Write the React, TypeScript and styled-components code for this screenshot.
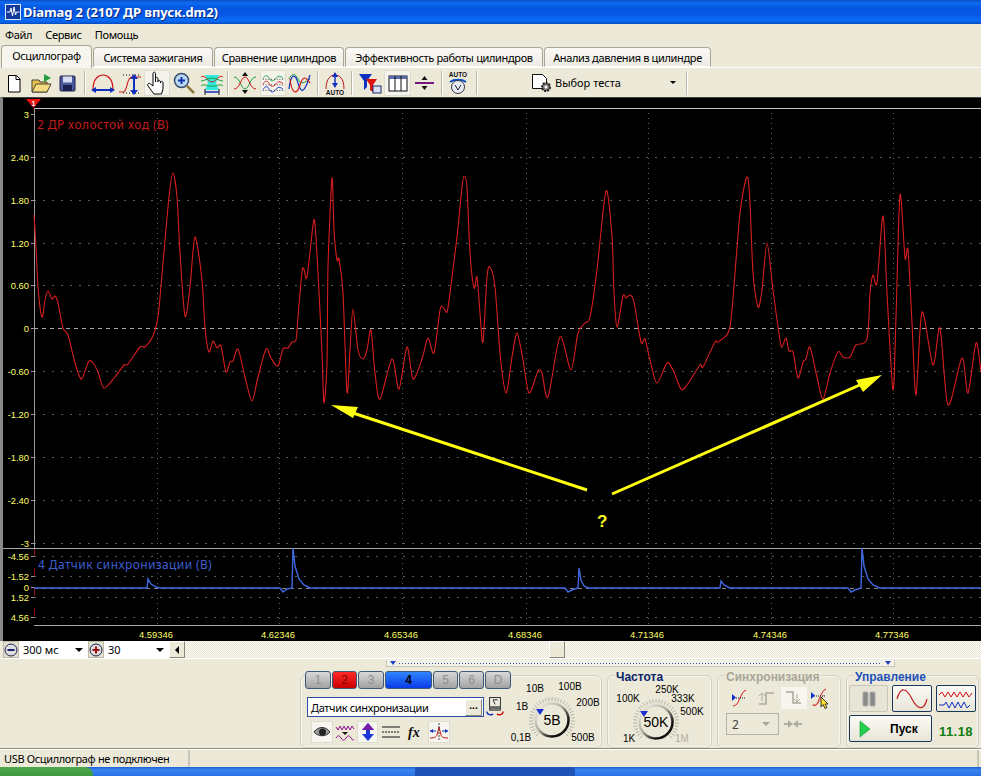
import React from 'react';
import styled, { createGlobalStyle } from 'styled-components';

const Global = createGlobalStyle`
  html, body { margin: 0; padding: 0; background: #ece9d8; }
  body { font-family: "Noto Sans", "Liberation Sans", sans-serif; font-size: 11px; color: #000; }
  * { box-sizing: border-box; }
`;

const Win = styled.div`
  width: 981px; height: 776px; overflow: hidden; display: flex; flex-direction: column; background: #ece9d8;
`;
const TitleBar = styled.div`
  height: 24px; flex: none; display: flex; align-items: center; gap: 2px; padding-left: 5px;
  background: linear-gradient(180deg,#0a4fc4 0,#0f6cf2 3px,#0558e2 7px,#0556e4 14px,#0a6cf6 20px,#0a62e8 22px,#0448b8 24px);
`;
const TitleText = styled.span`
  color: #fff; font: bold 13px "Noto Sans", sans-serif; letter-spacing: -0.1px; text-shadow: 1px 1px 0 #0a2a80; white-space: nowrap;
`;
const MenuBar = styled.div`
  height: 20px; flex: none; display: flex; align-items: center; padding-left: 5px; gap: 13px; font-size: 11px; letter-spacing: -0.3px;
`;
const TabStrip = styled.div`
  height: 24px; flex: none; display: flex; align-items: flex-end; padding-left: 1px; gap: 1px;
  border-bottom: 1px solid #fff;
`;
const Tab = styled.div<{ $active?: boolean; $w: number }>`
  width: ${p => p.$w}px; height: ${p => (p.$active ? 23 : 20)}px; display: flex; align-items: center; justify-content: center;
  border: 1px solid #a8a698; border-bottom: ${p => (p.$active ? 'none' : '1px solid #fff')};
  border-radius: 4px 4px 0 0;
  background: ${p => (p.$active ? '#f6f5ee' : 'linear-gradient(180deg,#fbfaf6,#ecebe2)')};
  ${p => (p.$active ? 'margin-bottom:-1px;padding-bottom:3px;' : '')}
  white-space: nowrap; font-size: 11px; letter-spacing: -0.35px;
`;
const Toolbar = styled.div`
  height: 29px; flex: none; display: flex; align-items: center; background: #ece9d8;
`;
const ToolBtn = styled.div<{ $w: number; $on?: boolean }>`
  width: ${p => p.$w}px; height: 26px; flex: none; display: flex; align-items: center; justify-content: center;
  ${p => (p.$on ? 'background:#f4f3ec;border:1px solid #dedcce;' : '')}
`;
const Sep = styled.div<{ $w: number }>`
  width: ${p => p.$w}px; height: 24px; flex: none; display: flex; justify-content: center;
  &::before { content: ''; width: 2px; height: 100%; background: linear-gradient(90deg,#b8b6a6 50%,#fff 50%); }
`;
const TestSelect = styled.div`
  width: 197px; flex: none; display: flex; align-items: center; padding: 0 7px 0 45px; gap: 2px; font-size: 11px;
`;
const TestLabel = styled.span` flex: 1; `;
const DownArrow = styled.span<{ $s?: number }>`
  width: 0; height: 0; border: ${p => p.$s ?? 4}px solid transparent; border-top: ${p => p.$s ?? 4}px solid #000; border-bottom: 0; flex: none;
`;
const ChartFrame = styled.div`
  height: 544px; flex: none; border-left: 3px solid #8a8a8a; background: #000; border-top: 1px solid #444;
  svg { display: block; }
`;
const ChartText = styled.text`
  font-family: "Liberation Sans", sans-serif; font-size: 9.4px; fill: #ffff66;
`;
const ChannelName = styled.text<{ $c: string }>`
  font-family: "Noto Sans", sans-serif; font-size: 12px; fill: ${p => p.$c}; letter-spacing: 0.4px;
`;
const Quest = styled.text`
  font-family: "Liberation Sans", sans-serif; font-size: 17px; font-weight: bold; fill: #ffff20;
`;
const RangeRow = styled.div`
  height: 18px; flex: none; display: flex; padding-left: 3px; border-bottom: 1px solid #fff;
`;
const RoundBtn = styled.div`
  width: 16px; height: 17px; flex: none; display: flex; align-items: center; justify-content: center;
  background: #e4e1d2; border: 1px solid #bdbaa8;
`;
const RangeCombo = styled.div<{ $w: number }>`
  width: ${p => p.$w}px; height: 17px; flex: none; background: #fff; display: flex; align-items: center;
  justify-content: space-between; padding: 0 5px 0 4px; font-size: 11px;
`;
const ScrollTrack = styled.div`
  flex: 1; height: 17px; display: flex; align-items: stretch;
  background: repeating-conic-gradient(#fbfaf5 0 25%, #e9e6d6 0 50%) 0 0 / 2px 2px;
`;
const ScrollBtn = styled.div<{ $ml?: number }>`
  width: 16px; flex: none; margin-left: ${p => p.$ml ?? 0}px; display: flex; align-items: center; justify-content: center;
  background: #ece9d8; border: 1px solid; border-color: #fff #8a8878 #8a8878 #fff;
`;
const LeftArrow = styled.span`
  width: 0; height: 0; border: 4px solid transparent; border-right: 4px solid #000; border-left: 0;
`;
const Lower = styled.div`
  height: 90px; flex: none; padding-left: 300px; display: flex; flex-direction: column; border-bottom: 1px solid #8f8d7e;
`;
const PosSlider = styled.div`
  width: 509px; height: 7px; margin: 1px 0 0 86px; flex: none; display: flex; align-items: center; justify-content: space-between;
  padding: 0 3px; gap: 3px; border: 1px solid #c8c6b6; border-top: 0;
  background: #f3f2ea;
`;
const Dots = styled.span`
  flex: 1; height: 1px; background: repeating-linear-gradient(90deg,#3a52a8 0 1px,transparent 1px 3px);
`;
const MiniTri = styled.span`
  width: 0; height: 0; border: 3px solid transparent; border-top: 4px solid #2040c0; border-bottom: 0;
`;
const Groups = styled.div`
  display: flex; gap: 5px; margin-top: 5px; height: 76px; align-items: stretch;
`;
const Group = styled.div<{ $w: number }>`
  width: ${p => p.$w}px; flex: none; border: 1px solid #d2d0c0; border-radius: 6px; height: 73px; margin-top: 3px;
  display: flex; flex-direction: column; box-shadow: inset 0 0 0 1px #f6f5ee;
`;
const GroupTitle = styled.div<{ $c: string }>`
  font: bold 12px "Liberation Sans", sans-serif; color: ${p => p.$c}; height: 15px; line-height: 15px;
  margin: -6px 0 0 7px; padding: 0 1px; align-self: flex-start; background: #ece9d8; white-space: nowrap;
  position: relative; z-index: 1;
`;
const ChannelBody = styled.div` display: flex; height: 100%; `;
const ChannelLeft = styled.div`
  width: 203px; flex: none; display: flex; flex-direction: column; margin-top: -5px; padding-left: 4px;
`;
const ChannelRow = styled.div` display: flex; gap: 1px; width: 212px; `;
const ChBtn = styled.div<{ $kind: 'off' | 'red' | 'blue'; $w: number }>`
  width: ${p => p.$w}px; height: 18px; flex: none; display: flex; align-items: center; justify-content: center;
  font: ${p => (p.$kind === 'blue' ? 'bold 12px' : '12px')} "Liberation Sans", sans-serif;
  border: 1px solid #3d5a78; border-radius: 3px;
  color: ${p => (p.$kind === 'off' ? '#8f8f8f' : p.$kind === 'red' ? '#8a0000' : '#000')};
  background: ${p => p.$kind === 'off' ? 'linear-gradient(180deg,#d8d8d8,#a2a2a2)' : p.$kind === 'red' ? 'linear-gradient(180deg,#ff2a2a,#c80000)' : 'linear-gradient(180deg,#2f86ff,#0a3ce8)'};
`;
const SensorRow = styled.div` display: flex; align-items: center; margin: 6px 0 0 2px; gap: 2px; `;
const SensorCombo = styled.div`
  width: 177px; height: 20px; flex: none; background: #fff; border: 1px solid #2a50a8; display: flex; align-items: center;
  justify-content: space-between; padding-left: 3px; font-size: 11px; letter-spacing: -0.35px;
`;
const MoreBtn = styled.div`
  width: 17px; height: 17px; margin-right: 1px; background: #ece9d8; border: 1px solid; border-color: #fff #8a8878 #8a8878 #fff;
  font: bold 10px/11px "Liberation Sans", sans-serif; text-align: center; letter-spacing: 0;
`;
const IconRow = styled.div` display: flex; gap: 2px; margin: 2px 0 0 6px; `;
const SmallBtn = styled.div<{ $w: number; $on?: boolean }>`
  width: ${p => p.$w}px; height: 22px; flex: none; display: flex; align-items: center; justify-content: center;
  ${p => (p.$on ? 'background:#f6f5ef;border:1px solid #dedccf;' : '')}
`;
const SyncIcons = styled.div` display: flex; margin: 2px 0 0 9px; gap: 1px; `;
const SyncBtn = styled.div<{ $on?: boolean }>`
  width: 26px; height: 22px; display: flex; align-items: center; justify-content: center; flex: none;
  ${p => (p.$on ? 'background:#f6f5ef;' : '')}
`;
const SyncRow = styled.div` display: flex; align-items: center; gap: 4px; margin: 4px 0 0 8px; `;
const SyncCombo = styled.div`
  width: 53px; height: 22px; border: 1px solid #b4b2a2; display: flex; align-items: center; justify-content: space-between;
  padding: 0 8px 0 5px; font-size: 12px; color: #444;
  span:last-child { border-top-color: #a8a698; }
`;
const CtrlGrid = styled.div`
  display: grid; grid-template-columns: 39px 40px 40px; grid-template-rows: 27px 27px; row-gap: 3px; column-gap: 4px;
  margin: 0 0 0 2px;
`;
const CtrlBtn = styled.div<{ $off?: boolean }>`
  display: flex; align-items: center; justify-content: center; border-radius: 2px;
  border: 1px solid ${p => (p.$off ? '#c8c6b6' : '#17385a')};
  background: ${p => (p.$off ? '#e8e5d6' : 'linear-gradient(180deg,#fbfaf5,#e8e5d8)')};
`;
const StartBtn = styled(CtrlBtn)`
  grid-column: 1 / span 2; justify-content: flex-start; padding-left: 9px; gap: 19px;
  font: bold 12px "Liberation Sans", sans-serif;
`;
const Counter = styled.div`
  color: #0f7a0f; font: bold 13px "Liberation Sans", sans-serif; display: flex; align-items: flex-end; justify-content: center; padding-bottom: 3px; letter-spacing: 0.4px;
`;
const KnobWrap = styled.div<{ $top: number }>`
  margin-top: ${p => p.$top}px; height: 72px; flex: none; svg { display: block; }
`;
const KnobText = styled.text<{ $muted?: boolean }>`
  font-family: "Liberation Sans", sans-serif; font-size: 10px; fill: ${p => (p.$muted ? '#b0aea0' : '#000')}; text-anchor: middle;
`;
const KnobValue = styled.text`
  font-family: "Liberation Sans", sans-serif; font-size: 14px; fill: #000; text-anchor: middle;
`;
const StatusBar = styled.div`
  height: 18px; flex: none; display: flex; border-top: 1px solid #fff;
`;
const StatusCell = styled.div<{ $w?: number }>`
  ${p => (p.$w ? `width:${p.$w}px;flex:none;` : 'flex:1;')} padding-left: 4px; display: flex; align-items: center;
  border-right: 2px solid #c8c6b6; margin-right: 2px; font-size: 11px; letter-spacing: -0.35px; white-space: nowrap;
`;
const Taskbar = styled.div`
  flex: 1; display: flex; background: linear-gradient(180deg,#1f5fd8 0,#3a86ee 3px,#2a6ee4 9px);
`;
const StartPart = styled.div`
  width: 93px; flex: none; border-radius: 0 8px 0 0; background: linear-gradient(180deg,#4fa84f,#3f9a3f);
`;
const TaskItem = styled.div<{ $w: number; $ml: number; $c: string }>`
  width: ${p => p.$w}px; margin-left: ${p => p.$ml}px; flex: none; background: ${p => p.$c}; border-radius: 3px 3px 0 0;
`;

const red = '34,215 36,247 38,287 42,317 45,300 48,291 52,299 55,296 58,303 63,328 68,335 75,363 81,379 85,371 89,361 93,363 98,372 104,388 115,377 124,365 128,364 140,347 145,347 153,336 158,317 163,263 169,197 173,173 177,197 180,253 185,316 190,287 195,237 202,280 205,328 209,352 213,341 217,348 221,346 226,372 230,362 233,361 238,349 245,377 252,401 258,377 266,349 271,358 278,366 283,349 288,348 292,342 296,340 298,317 302,272 304,269 307,277 313,225 315,224 318,273 322,353 324,403 327,363 328,267 332,178 334,230 337,260 339,259 343,293 347,392 350,350 353,309 358,350 363,359 367,350 371,330 375,373 380,399 392,359 399,389 407,347 413,379 422,359 428,338 434,353 440,310 443,307 447,312 450,293 457,237 462,187 464,176 467,187 470,253 474,288 477,277 480,313 483,342 487,277 490,267 495,287 500,353 506,393 512,357 517,333 523,360 529,393 538,371 542,373 548,397 560,337 571,370 578,333 585,323 590,317 597,270 606,191 612,237 614,293 617,327 623,296 626,298 630,295 634,302 641,342 645,339 650,360 657,383 667,363 673,370 681,389 687,385 700,365 703,367 715,342 718,342 728,333 732,310 740,213 747,177 750,203 753,273 758,307 762,290 767,243 773,290 780,340 782,347 786,338 789,351 793,352 798,378 803,362 806,359 810,347 817,377 823,399 830,373 838,352 843,357 850,357 856,345 867,339 870,293 873,275 877,283 883,216 887,293 893,390 896,317 900,195 905,258 908,250 912,323 916,395 922,312 933,365 940,328 948,405 962,358 968,393 976,343 981,372';
const blue = '34,588 147,588 148,579 151,584 156,587 160,588 280,588 283,592 287,589 292,588 293,548 295,566 299,579 304,585 310,588 565,588 568,592 572,590 578,588 579,568 581,580 584,586 588,588 720,588 721,581 724,585 730,588 848,588 851,592 855,590 861,588 862,548 864,566 868,579 873,585 880,588 981,588';

// Catmull-Rom through the sampled points, so the trace has the oscilloscope's rounded shape.
const smooth = (src: string) => {
  const p = src.split(' ').map(s => s.split(',').map(Number));
  let d = `M${p[0][0]} ${p[0][1]}`;
  for (let i = 0; i < p.length - 1; i++) {
    const a = p[Math.max(i - 1, 0)], b = p[i], c = p[i + 1], e = p[Math.min(i + 2, p.length - 1)];
    const t = 0.14;
    d += `C${(b[0] + (c[0] - a[0]) * t).toFixed(1)} ${(b[1] + (c[1] - a[1]) * t).toFixed(1)} ${(c[0] - (e[0] - b[0]) * t).toFixed(1)} ${(c[1] - (e[1] - b[1]) * t).toFixed(1)} ${c[0]} ${c[1]}`;
  }
  return d;
};

const hLines = [157, 200, 243, 285, 371, 414, 457, 500, 543, 556, 576, 597, 617];
const vLines = [157, 279, 402, 526, 648, 771, 893];
const yLabels: [string, number][] = [['3', 114], ['2.40', 157], ['1.80', 200], ['1.20', 243], ['0.60', 285], ['0', 328], ['-0.60', 371], ['-1.20', 414], ['-1.80', 457], ['-2.40', 500], ['-3', 543], ['-4.56', 556], ['-1.52', 576], ['0', 587], ['1.52', 597], ['4.56', 617]];
const xLabels = ['4.59346', '4.62346', '4.65346', '4.68346', '4.71346', '4.74346', '4.77346'];

const Chart = () => (
  <svg width={978} height={543} viewBox="3 98 978 543">
    {hLines.map(y => <line key={y} x1={34} x2={981} y1={y + .5} y2={y + .5} stroke="#5e5e5e" strokeDasharray="2 7" />)}
    {vLines.map(x => <line key={x} x1={x + .5} x2={x + .5} y1={108} y2={625} stroke="#5e5e5e" strokeDasharray="1 4" />)}
    <line x1={34} x2={981} y1={328.5} y2={328.5} stroke="#a8a8a8" strokeDasharray="4 4" />
    <line x1={34} x2={981} y1={588.5} y2={588.5} stroke="#888" strokeDasharray="4 4" />
    <line x1={34} x2={981} y1={108.5} y2={108.5} stroke="#c4c4c4" />
    <line x1={34.5} x2={34.5} y1={108} y2={548} stroke="#9a9a9a" />
    <line x1={34.5} x2={34.5} y1={548} y2={625} stroke="#8a1010" strokeDasharray="8 12" />
    <line x1={3} x2={981} y1={548.5} y2={548.5} stroke="#a8a8a8" />
    <line x1={34} x2={981} y1={625.5} y2={625.5} stroke="#a8a8a8" />
    {yLabels.map(([t, y], i) => (
      <g key={i}>
        <line x1={31} x2={34} y1={y + .5} y2={y + .5} stroke="#999" />
        <ChartText x={29} y={y + 4} textAnchor="end">{t}</ChartText>
      </g>
    ))}
    {xLabels.map((t, i) => <ChartText key={t} x={vLines[i] - 1} y={638} textAnchor="middle">{t}</ChartText>)}
    <polygon points="26,99 41,99 33.5,108" fill="#f01010" />
    <text x={33.5} y={106} textAnchor="middle" fontFamily="Liberation Sans" fontWeight="bold" fontSize={7} fill="#fff">1</text>
    <ChannelName $c="#c41c1c" x={37} y={129}>2 ДР холостой ход (В)</ChannelName>
    <ChannelName $c="#3f5ed0" x={38} y={569}>4 Датчик синхронизации (В)</ChannelName>
    <path d={smooth(red)} fill="none" stroke="#d81e1e" strokeWidth={1.1} />
    <polyline points={blue} fill="none" stroke="#3f68e0" strokeWidth={1.4} />
    <line x1={587} y1={490} x2={350} y2={412} stroke="#ffff10" strokeWidth={3} />
    <polygon points="331,405 358,407 353,418" fill="#ffff10" />
    <line x1={612} y1={494} x2={862} y2={384} stroke="#ffff10" strokeWidth={3} />
    <polygon points="882,375 856,380 863,392" fill="#ffff10" />
    <Quest x={597} y={527}>?</Quest>
  </svg>
);

const S: React.FC<{ w?: number; h?: number; children: React.ReactNode }> = ({ w = 24, h = 24, children }) => (
  <svg width={w} height={h} viewBox={`0 0 ${w} ${h}`} fill="none">{children}</svg>
);
const AppLogo = () => (
  <S w={16} h={16}>
    <rect x=".5" y=".5" width="15" height="15" fill="#123a9a" stroke="#dfe8ff" />
    <path d="M2 8h3l1-4 1.500 8 1.500-9 1.500 8 1-3h3" stroke="#fff" />
  </S>
);
const NewIco = () => <S><path d="M6.500 4.500h8l3.500 3.500v13h-11.500z" fill="#fff" stroke="#000" /><path d="M14 4.500v4h4" stroke="#000" /></S>;
const OpenIco = () => <S><path d="M3 21V9h7l1 2h7v10z" fill="#e8c050" stroke="#443" /><path d="M3 21l4-8h15l-4 8z" fill="#f6dc80" stroke="#443" /><path d="M15 9V3l7 4-7 4z" fill="#22a040" /></S>;
const SaveIco = () => <S><rect x="4" y="5" width="15" height="15" rx="1" fill="#4a5a9a" stroke="#1a2050" /><rect x="7" y="5.500" width="9" height="6" fill="#d8dcf0" /><rect x="7" y="14" width="9" height="6" fill="#1a2050" /></S>;
const Ico1 = () => <S w={26}><path d="M3 19C3 7 9 4 13 4s10 3 10 15" stroke="#d01818" strokeWidth="1.200" /><path d="M3 19h20" stroke="#1030c0" strokeWidth="2" /><path d="M1 19l5-3v6zM25 19l-5-3v6z" fill="#1030c0" /></S>;
const Ico2 = () => <S w={26}><path d="M1 21h4c5 0 3-15 9-15h9" stroke="#d01818" strokeWidth="1.100" /><path d="M5 4h18M5 22h18" stroke="#111" strokeDasharray="1 2" /><path d="M16 7v13" stroke="#1030c0" strokeWidth="2" /><path d="M16 3l-4 5h8zM16 24l-4-5h8z" fill="#1030c0" /></S>;
const HandIco = () => <S w={24} h={26}><path d="M9 24l-6-8c-1-2 1-3.500 2.500-2L8 16V4c0-2.500 2.500-2.500 2.500 0v8l0-3c0-2 2.500-2 2.500 0v3c0-2 2.500-2 2.500 0v1c0-2 2.500-2 2.500 0v6l-1.500 5z" fill="#fff" stroke="#000" /></S>;
const ZoomIco = () => <S><circle cx="9.500" cy="9.500" r="7" fill="#b8d8f4" stroke="#3a4a6a" strokeWidth="1.500" /><path d="M6 9.500h7M9.500 6v7" stroke="#1030b0" strokeWidth="2" /><path d="M15 15l7 7" stroke="#8a7a40" strokeWidth="2.500" /></S>;
const CyanIco = () => <S w={26}><path d="M6 4h14l-3 8 3 7H6l3-7z" fill="#30e8dc" /><path d="M2 6c4-3 7 5 11 5s7-8 11-5" stroke="#d01818" /><path d="M2 10c4 0 6-3 11-3M2 15c4-3 7 1 11 0" stroke="#16a040" /><path d="M24 10c-4 0-6-3-11-3M24 15c-4-3-7 1-11 0" stroke="#16a040" /><path d="M6 21h14" stroke="#1030c0" strokeWidth="1.500" /><path d="M6 18v6M20 18v6" stroke="#111" /></S>;
const Ico3 = () => <S w={26}><path d="M2 6c6 0 7 12 11 12s5-12 11-12" stroke="#18a040" /><path d="M2 18c6 0 7-12 11-12s5 12 11 12" stroke="#d01818" /><path d="M13 1l-3 4h6zM13 23l-3-4h6z" fill="#111" /></S>;
const Ico4 = () => <S w={26}>{[5, 11, 17].map((y, i) => <g key={y}><path d={`M2 ${y + 2}c3-4 5-4 7 0s5 3 7 0 5-3 8 0`} stroke={['#18a040', '#d01818', '#1030c0'][i]} /><path d={`M2 ${y + 3}h22`} stroke="#222" strokeDasharray="1 2" /></g>)}</S>;
const Ico5 = () => <S w={26}><path d="M2 8c3-6 6-6 9 0s6 4 12 0" stroke="#18a040" /><path d="M2 18C4 2 8 2 11 12s6 12 12-8" stroke="#1030c0" strokeWidth="1.200" /><path d="M3 8c2 16 7 16 10 6s6-8 10-2" stroke="#d01818" strokeWidth="1.200" /></S>;
const Ico6 = () => <S w={22}><path d="M2 18C2 7 7 4 11 4s9 3 9 14" stroke="#c01818" /><path d="M11 4v11" stroke="#1030c0" strokeWidth="1.500" /><path d="M11 1l-3 5h6zM11 17l-3-5h6z" fill="#1030c0" /><text x="11" y="23.500" textAnchor="middle" fontFamily="Liberation Sans" fontWeight="bold" fontSize="6.500" fill="#111">AUTO</text></S>;
const FilterIco = () => <S><path d="M1 3h13l-5 7v6l-3 3v-9z" fill="#1030c0" /><path d="M8 8h11l-4 6v7l-3-2v-5z" fill="#e01010" /><rect x="15" y="15" width="8" height="7" fill="#d8e0f4" stroke="#1a2a70" /></S>;
const TableIco = () => <S><rect x="3" y="5" width="18" height="15" fill="#fff" stroke="#111" /><rect x="3" y="5" width="18" height="3" fill="#5a6aa8" /><path d="M9 5v15M15 5v15" stroke="#111" /></S>;
const DivIco = () => <S><path d="M3 12h19" stroke="#701880" strokeWidth="2" /><path d="M12.500 5l-3 4h6zM12.500 19l-3-4h6z" fill="#111" /></S>;
const AutoGauge = () => <S w={20}><text x="10" y="6" textAnchor="middle" fontFamily="Liberation Sans" fontWeight="bold" fontSize="6.500" fill="#111">AUTO</text><path d="M2 11c4-3 12-3 16 0" stroke="#1050c0" strokeWidth="2" /><circle cx="10" cy="16" r="6.500" fill="#e8ecf4" stroke="#334" /><path d="M7 14l3 5 3-5" stroke="#223" /></S>;
const TestIco = () => <S w={22}><path d="M1.500 3.500h10l4 4v10h-14z" fill="#fff" stroke="#111" /><circle cx="15" cy="16" r="4" fill="#777" stroke="#222" strokeDasharray="2 1" strokeWidth="2" /><circle cx="15" cy="16" r="1.500" fill="#fff" /></S>;
const Minus = () => <S w={14} h={14}><circle cx="7" cy="7" r="6" fill="#ddd" stroke="#1a2050" /><path d="M3.500 7h7" stroke="#1a2070" strokeWidth="2" /></S>;
const Plus = () => <S w={14} h={14}><circle cx="7" cy="7" r="6" fill="#ddd" stroke="#1a2050" /><path d="M3.500 7h7M7 3.500v7" stroke="#a01010" strokeWidth="2" /></S>;
const MeterIco = () => <S w={20}><rect x="4" y="1.500" width="12" height="14" fill="#e8e8e0" stroke="#222" /><path d="M4 11h12v4H4z" fill="#666" /><path d="M8 4l2 5M8 4h5" stroke="#222" /><path d="M1 17c0 4 5 4 7 3" stroke="#1030c0" strokeWidth="1.500" /><path d="M19 17c0 4-5 4-7 3" stroke="#d01010" strokeWidth="1.500" /></S>;
const EyeIco = () => <S w={18} h={14}><path d="M1 7c4-6 12-6 16 0-4 5-12 5-16 0z" fill="#999" stroke="#333" /><circle cx="9.500" cy="7" r="3.500" fill="#222" /></S>;
const SigIco = () => <S w={20} h={20}><path d="M1 5l2 3 2-4 2 4 2-4 2 4 2-4 2 4 2-4 2 3" stroke="#901090" /><path d="M1 16c2-3 3-3 5 0s3 3 5 0 3-3 5 0 2 2 3 1" stroke="#901090" /><path d="M10 13l-3-3h6z" fill="#111" /></S>;
const UpDown = () => <S w={18} h={20}><path d="M9 1L3 8h4v4H3l6 7 6-7h-4V8h4z" fill="#1c38d8" /><path d="M9 1L3 8h12z" fill="#7a18a8" /></S>;
const Lines = () => <S w={20} h={20}><path d="M1 5h18M1 15h18" stroke="#111" strokeWidth="1.200" /><path d="M1 10h18" stroke="#111" strokeDasharray="2 1" /></S>;
const FxIco = () => <S w={16} h={18}><text x="1" y="14" fontFamily="Liberation Serif" fontStyle="italic" fontWeight="bold" fontSize="14" fill="#111">fx</text></S>;
const PeakIco = () => <S w={20} h={20}><path d="M1 16c5 0 6-1 7-3l2-8 2 8c1 2 2 3 7 3" stroke="#d01010" /><path d="M1 9h6M13 9h6" stroke="#1030c0" /><path d="M1 9l3-2v4zM19 9l-3-2v4z" fill="#1030c0" /><path d="M10 1v18" stroke="#444" strokeDasharray="2 1" /></S>;
const SyncA = () => <S w={20} h={20}><path d="M3 18c5-1 5-4 7-8s3-7 6-8" stroke="#d01818" /><path d="M2 10h14" stroke="#223" strokeDasharray="1 1" /><path d="M2 6l4 3.500-4 3.500z" fill="#1030d0" /></S>;
const SyncB = () => <S w={20} h={20}><path d="M2 16h7V5h8" stroke="#aaa89a" strokeWidth="1.500" /><path d="M5 13V6M2 8l3-3 3 3" stroke="#b0ae9e" /></S>;
const SyncC = () => <S w={20} h={20}><path d="M2 4h7v11h8" stroke="#aaa89a" strokeWidth="1.500" /><path d="M13 6v7M10 11l3 3 3-3" stroke="#b0ae9e" /></S>;
const SyncD = () => <S w={22} h={22}><path d="M3 18c5 1 5-4 7-8s3-7 6-8" stroke="#d01818" /><path d="M2 18c6 3 6-4 12-10" stroke="#d01818" opacity=".5" /><path d="M2 9h14" stroke="#223" strokeDasharray="1 1" /><path d="M1 5l4 3.500-4 3.500z" fill="#1030d0" /><path d="M11 10v10l2-2.500 2 4 2-1-2-3.500h3z" fill="#ffe030" stroke="#111" strokeWidth=".8" /></S>;
const Merge = () => <S w={20} h={14}><path d="M1 7h6M13 7h6" stroke="#b0ae9e" strokeWidth="2" /><path d="M10 7L5 3v8zM10 7l5-4v8z" fill="#b0ae9e" /></S>;
const PauseIco = () => <S w={14} h={18}><rect x="1" y="2" width="5" height="14" rx="1" fill="#8a8a8a" stroke="#aaa" /><rect x="8" y="2" width="5" height="14" rx="1" fill="#8a8a8a" stroke="#aaa" /></S>;
const SineIco = () => <S w={32} h={20}><path d="M1 10C5-4 11 0 16 10s12 13 15 0" stroke="#c02020" strokeWidth="1.200" /></S>;
const MultiIco = () => <S w={36} h={22}><path d="M1 7l3-3 3 5 3-5 3 5 3-5 3 5 3-5 3 5 3-5 3 5 3-4" stroke="#d01010" /><path d="M1 17h5l2-3 3 6 3-6 3 6 3-6 3 6 3-6 3 6 3-3" stroke="#1030c0" /></S>;
const PlayIco = () => <S w={12} h={18}><path d="M1 1l10 8-10 8z" fill="#22d050" stroke="#129030" strokeWidth=".6" /></S>;

const Knob: React.FC<{ value: string; labels: [string, number, number, boolean?][]; tri: [number, number] }> = ({ value, labels, tri }) => {
  const ticks = Array.from({ length: 33 }, (_, i) => -225 + i * (270 / 32));
  return (
    <svg width={96} height={72} viewBox="-48 -42 96 72">
      {ticks.map(a => {
        const r = (a * Math.PI) / 180;
        return <line key={a} x1={Math.cos(r) * 19} y1={Math.sin(r) * 19} x2={Math.cos(r) * 23} y2={Math.sin(r) * 23} stroke="#b4b2a4" />;
      })}
      <defs>
        <linearGradient id={`ring${value}`} x1="0" y1="0" x2="1" y2="1">
          <stop offset="0" stopColor="#f4f3ec" />
          <stop offset=".45" stopColor="#b0aea2" />
          <stop offset=".75" stopColor="#111" />
          <stop offset="1" stopColor="#111" />
        </linearGradient>
      </defs>
      <circle r={16.500} fill="#ece9d8" stroke={`url(#ring${value})`} strokeWidth={2.500} />
      <polygon points={`${tri[0] - 4},${tri[1] - 3} ${tri[0] + 4},${tri[1] - 3} ${tri[0]},${tri[1] + 3}`} fill="#1c30d0" />
      <KnobValue y={5}>{value}</KnobValue>
      {labels.map(([t, x, y, m]) => <KnobText key={t} $muted={m} x={x} y={y}>{t}</KnobText>)}
    </svg>
  );
};

export default function App() {
  return (
    <Win>
      <Global />
      <TitleBar><AppLogo /><TitleText>Diamag 2 (2107 ДР впуск.dm2)</TitleText></TitleBar>
      <MenuBar><span>Файл</span><span>Сервис</span><span>Помощь</span></MenuBar>
      <TabStrip>
        <Tab $active $w={91}>Осциллограф</Tab>
        <Tab $w={120}>Система зажигания</Tab>
        <Tab $w={130}>Сравнение цилиндров</Tab>
        <Tab $w={198}>Эффективность работы цилиндров</Tab>
        <Tab $w={167}>Анализ давления в цилиндре</Tab>
      </TabStrip>
      <Toolbar>
        <ToolBtn $w={27}><NewIco /></ToolBtn>
        <ToolBtn $w={28}><OpenIco /></ToolBtn>
        <ToolBtn $w={26}><SaveIco /></ToolBtn>
        <Sep $w={8} />
        <ToolBtn $w={28}><Ico1 /></ToolBtn>
        <ToolBtn $w={27}><Ico2 /></ToolBtn>
        <ToolBtn $w={26} $on><HandIco /></ToolBtn>
        <ToolBtn $w={27}><ZoomIco /></ToolBtn>
        <ToolBtn $w={30}><CyanIco /></ToolBtn>
        <Sep $w={2} />
        <ToolBtn $w={31}><Ico3 /></ToolBtn>
        <ToolBtn $w={26} $on><Ico4 /></ToolBtn>
        <ToolBtn $w={28}><Ico5 /></ToolBtn>
        <Sep $w={8} />
        <ToolBtn $w={26}><Ico6 /></ToolBtn>
        <Sep $w={8} />
        <ToolBtn $w={28}><FilterIco /></ToolBtn>
        <ToolBtn $w={27} $on><TableIco /></ToolBtn>
        <ToolBtn $w={25}><DivIco /></ToolBtn>
        <Sep $w={12} />
        <ToolBtn $w={20}><AutoGauge /></ToolBtn>
        <Sep $w={18} />
        <TestSelect><TestIco /><TestLabel>Выбор теста</TestLabel><DownArrow $s={3} /></TestSelect>
        <Sep $w={8} />
      </Toolbar>
      <ChartFrame><Chart /></ChartFrame>
      <RangeRow>
        <RoundBtn><Minus /></RoundBtn>
        <RangeCombo $w={69}>300 мс<DownArrow /></RangeCombo>
        <RoundBtn><Plus /></RoundBtn>
        <RangeCombo $w={65}>30<DownArrow /></RangeCombo>
        <ScrollTrack>
          <ScrollBtn><LeftArrow /></ScrollBtn>
          <ScrollBtn $ml={364} />
        </ScrollTrack>
      </RangeRow>
      <Lower>
        <PosSlider><MiniTri /><Dots /><MiniTri /></PosSlider>
        <Groups>
          <Group $w={302}>
            <ChannelBody>
              <ChannelLeft>
                <ChannelRow>
                  <ChBtn $kind="off" $w={26}>1</ChBtn>
                  <ChBtn $kind="red" $w={25}>2</ChBtn>
                  <ChBtn $kind="off" $w={26}>3</ChBtn>
                  <ChBtn $kind="blue" $w={47}>4</ChBtn>
                  <ChBtn $kind="off" $w={25}>5</ChBtn>
                  <ChBtn $kind="off" $w={25}>6</ChBtn>
                  <ChBtn $kind="off" $w={26}>D</ChBtn>
                </ChannelRow>
                <SensorRow>
                  <SensorCombo>Датчик синхронизации<MoreBtn>...</MoreBtn></SensorCombo>
                  <MeterIco />
                </SensorRow>
                <IconRow>
                  <SmallBtn $w={22} $on><EyeIco /></SmallBtn>
                  <SmallBtn $w={20}><SigIco /></SmallBtn>
                  <SmallBtn $w={21} $on><UpDown /></SmallBtn>
                  <SmallBtn $w={22}><Lines /></SmallBtn>
                  <SmallBtn $w={22}><FxIco /></SmallBtn>
                  <SmallBtn $w={22} $on><PeakIco /></SmallBtn>
                </IconRow>
              </ChannelLeft>
              <KnobWrap $top={2}>
                <Knob value="5В" tri={[-12, -8]} labels={[['10В', -17, -28], ['100В', 18, -30], ['200В', 36, -14], ['500В', 31, 21], ['0,1В', -31, 21], ['1В', -30, -10]]} />
              </KnobWrap>
            </ChannelBody>
          </Group>
          <Group $w={105}>
            <GroupTitle $c="#0a246a">Частота</GroupTitle>
            <KnobWrap $top={-5}>
              <Knob value="50K" tri={[-12, -8]} labels={[['100K', -28, -20], ['250K', 11, -29], ['333K', 27, -20], ['500K', 36, -7], ['1K', -27, 20], ['1M', 26, 20, true]]} />
            </KnobWrap>
          </Group>
          <Group $w={124}>
            <GroupTitle $c="#a8a69a">Синхронизация</GroupTitle>
            <SyncIcons>
              <SyncBtn><SyncA /></SyncBtn>
              <SyncBtn><SyncB /></SyncBtn>
              <SyncBtn $on><SyncC /></SyncBtn>
              <SyncBtn><SyncD /></SyncBtn>
            </SyncIcons>
            <SyncRow>
              <SyncCombo>2<DownArrow /></SyncCombo>
              <Merge />
            </SyncRow>
          </Group>
          <Group $w={133}>
            <GroupTitle $c="#1c50b8">Управление</GroupTitle>
            <CtrlGrid>
              <CtrlBtn $off><PauseIco /></CtrlBtn>
              <CtrlBtn><SineIco /></CtrlBtn>
              <CtrlBtn><MultiIco /></CtrlBtn>
              <StartBtn><PlayIco />Пуск</StartBtn>
              <Counter>11.18</Counter>
            </CtrlGrid>
          </Group>
        </Groups>
      </Lower>
      <StatusBar>
        <StatusCell $w={190}>USB Осциллограф не подключен</StatusCell>
        <StatusCell />
      </StatusBar>
      <Taskbar>
        <StartPart />
        <TaskItem $w={160} $ml={322} $c="#1e52b7" />
      </Taskbar>
    </Win>
  );
}
